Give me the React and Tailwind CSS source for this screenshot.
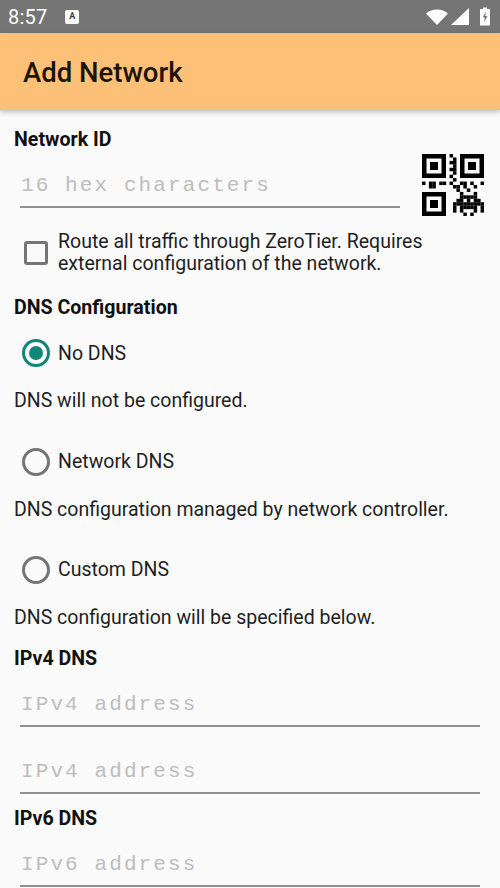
const QR = [
  "0000000" + "0100" + "0000000",
  "0000000" + "0010" + "0000000",
  "0000000" + "0110" + "0000000",
  "0000000" + "0010" + "0000000",
  "0000000" + "0110" + "0000000",
  "0000000" + "0010" + "0000000",
  "0000000" + "0100" + "0000000",
  "000000000100000000",
  "101101101001101001",
  "001100000110100100",
  "000000000010010000",
  "0000000" + "00" + "001000100",
  "0000000" + "00" + "001111100",
  "0000000" + "00" + "011010110",
  "0000000" + "00" + "111111111",
  "0000000" + "00" + "101111101",
  "0000000" + "00" + "101000101",
  "0000000" + "00" + "000101000",
];

const FINDERS = [
  [0, 0],
  [38, 0],
  [0, 38],
];

const CELL = 62 / 18;

const Qr = () => (
  <svg width="62" height="62" viewBox="0 0 62 62" className="shrink-0">
    {FINDERS.map(([x, y]) => (
      <g key={`${x}-${y}`}>
        <rect x={x + 2.25} y={y + 2.25} width="19.5" height="19.5" fill="none" stroke="#000" strokeWidth="4.5" />
        <rect x={x + 8} y={y + 8} width="8" height="8" fill="#000" />
      </g>
    ))}
    {QR.map((row, y) =>
      row.split("").map((c, x) => (c === "1" ? <rect key={`${x}-${y}`} x={x * CELL} y={y * CELL} width={CELL + 0.05} height={CELL + 0.05} fill="#000" /> : null))
    )}
  </svg>
);

const StatusBar = () => (
  <div className="h-[33px] bg-[#757575] flex items-center pl-[8px] pr-[10px] text-white">
    <span className="text-[20px] leading-none tracking-[0.2px]">8:57</span>
    <div className="ml-[18px] w-[14px] h-[14px] bg-white rounded-[2px] flex items-center justify-center">
      <span className="text-[#444] text-[9px] font-bold leading-none">A</span>
    </div>
    <div className="ml-auto flex items-center">
      <svg width="22" height="16" viewBox="0 0 22 16">
        <path d="M0 4.5 C6 -1 16 -1 22 4.5 L11 16 Z" fill="#fff" />
      </svg>
      <svg width="18" height="17" viewBox="0 0 18 17" className="ml-[3px]">
        <path d="M0 17 L18 0 V17 Z" fill="#fff" />
      </svg>
      <svg width="10" height="19" viewBox="0 0 10 18" className="ml-[11px]">
        <path d="M3 0 H7 V1.5 H10 V18 H0 V1.5 H3 Z" fill="#fff" />
        <path d="M5.8 4 L2.8 10 H4.8 L4.2 15 L7.4 8.5 H5.3 Z" fill="#757575" />
      </svg>
    </div>
  </div>
);

const Placeholder = ({ text }) => (
  <span className="font-['Liberation_Mono',monospace] text-[#bdbdbd] text-[21px] tracking-[2.1px] leading-none">{text}</span>
);

const Field = ({ text, className }) => (
  <div className={`h-[42px] border-b-2 border-[#8f8f8f] flex items-center pl-[1px] pb-[2px] ${className}`}>
    <Placeholder text={text} />
  </div>
);

const Label = ({ children, className }) => (
  <div className={`font-bold text-[19.6px] leading-[24px] text-[#111] pl-[14px] ${className}`}>{children}</div>
);

const Radio = ({ label, checked, className }) => (
  <div className={`flex items-center pl-[22px] h-[28px] ${className}`}>
    <div className={`w-[28px] h-[28px] rounded-full border-[3px] flex items-center justify-center ${checked ? "border-[#118577]" : "border-[#757575]"}`}>
      {checked && <div className="w-[14px] h-[14px] rounded-full bg-[#118577]" />}
    </div>
    <span className={`ml-[8px] text-[19.5px] text-[#1f1f1f] leading-none ${checked ? "pt-[2px]" : ""}`}>{label}</span>
  </div>
);

const Hint = ({ children, className }) => (
  <div className={`pl-[14px] text-[19.5px] leading-[24px] text-[#1f1f1f] ${className}`}>{children}</div>
);

export default function App() {
  return (
    <div className="h-[888px] w-[500px] overflow-hidden bg-[#fafafa] font-['Roboto',sans-serif]">
      <StatusBar />
      <div className="h-[77px] bg-[#fdc077] shadow-[0_2px_5px_rgba(0,0,0,0.25)] flex items-center pl-[23px] pt-[2px]">
        <span className="font-medium text-[27.5px] text-[#1d1409] leading-none">Add Network</span>
      </div>

      <Label className="mt-[18px]">Network ID</Label>
      <div className="flex items-start pl-[20px] pr-[16px]">
        <Field text="16 hex characters" className="w-[380px] mt-[14px]" />
        <div className="ml-[22px] mt-[2px]">
          <Qr />
        </div>
      </div>

      <div className="flex items-center pl-[24px] mt-[14px]">
        <div className="w-[24px] h-[24px] rounded-[3px] border-[3px] border-[#757575]" />
        <div className="ml-[10px] pt-[1px] text-[19.5px] leading-[22px] text-[#1f1f1f]">
          Route all traffic through ZeroTier. Requires
          <br />
          external configuration of the network.
        </div>
      </div>

      <Label className="mt-[21px]">DNS Configuration</Label>
      <Radio checked label="No DNS" className="mt-[19px]" />
      <Hint className="mt-[22px]">DNS will not be configured.</Hint>
      <Radio label="Network DNS" className="mt-[35px]" />
      <Hint className="mt-[22px]">DNS configuration managed by network controller.</Hint>
      <Radio label="Custom DNS" className="mt-[34px]" />
      <Hint className="mt-[22px]">DNS configuration will be specified below.</Hint>

      <Label className="mt-[17px]">IPv4 DNS</Label>
      <div className="px-[20px]">
        <Field text="IPv4 address" className="mt-[14px]" />
        <Field text="IPv4 address" className="mt-[25px]" />
      </div>
      <Label className="mt-[13px]">IPv6 DNS</Label>
      <div className="px-[20px]">
        <Field text="IPv6 address" className="mt-[14px]" />
      </div>
    </div>
  );
}
